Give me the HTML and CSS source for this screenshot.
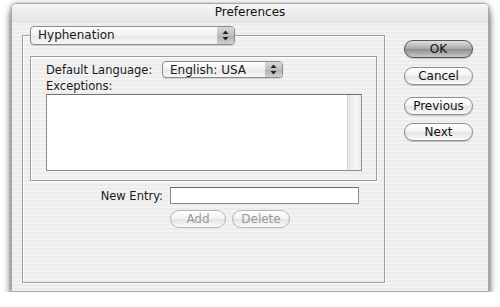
FILE: index.html
```html
<!DOCTYPE html>
<html lang="en">

<head>
    <meta charset="UTF-8">
    <title>Preferences</title>
    <link rel="stylesheet" href="styles.css">
</head>

<body>
    <div class="window">
        <div class="titlebar">Preferences</div>
        <div class="content">
            <fieldset class="panel">
                <legend class="panel-legend">
                    <div class="popup popup-section">
                        <span class="popup-label">Hyphenation</span>
                        <span class="popup-arrows">
                            <svg width="7" height="11" viewBox="0 0 7 11">
                                <path d="M3.5 0.5 L6.5 4 L0.5 4 Z" fill="#222"/>
                                <path d="M3.5 10.5 L6.5 7 L0.5 7 Z" fill="#222"/>
                            </svg>
                        </span>
                    </div>
                </legend>
                <div class="group">
                    <div class="lang-row">
                        <label class="lang-label">Default Language:</label>
                        <div class="popup popup-lang">
                            <span class="popup-label">English: USA</span>
                            <span class="popup-arrows">
                                <svg width="7" height="11" viewBox="0 0 7 11">
                                    <path d="M3.5 0.5 L6.5 4 L0.5 4 Z" fill="#222"/>
                                    <path d="M3.5 10.5 L6.5 7 L0.5 7 Z" fill="#222"/>
                                </svg>
                            </span>
                        </div>
                    </div>
                    <div class="exceptions-label">Exceptions:</div>
                    <div class="listbox">
                        <div class="list-area"></div>
                        <div class="scrollbar"></div>
                    </div>
                </div>
                <div class="entry-row">
                    <label class="entry-label" for="entry">New Entry:</label>
                    <input class="field" id="entry" type="text">
                </div>
                <div class="button-row">
                    <button class="btn btn-add" disabled>Add</button>
                    <button class="btn btn-delete" disabled>Delete</button>
                </div>
            </fieldset>
            <div class="side-buttons">
                <button class="btn btn-side btn-default">OK</button>
                <button class="btn btn-side btn-cancel">Cancel</button>
                <button class="btn btn-side btn-prev">Previous</button>
                <button class="btn btn-side btn-next">Next</button>
            </div>
        </div>
    </div>
</body>

</html>
```

FILE: styles.css
```css
body {
    margin: 0;
    padding: 0;
    background-color: #fff;
    font-family: "DejaVu Sans", sans-serif;
    font-size: 11.5px;
    color: #1a1a1a;
}

.window {
    box-sizing: border-box;
    margin: 3px 0 0 11px;
    width: 478px;
    height: 289px;
    border: 1px solid #a8a8a8;
    border-radius: 5px 5px 0 0;
    background: repeating-linear-gradient(#ececec 0, #ececec 2px, #f3f3f3 2px, #f3f3f3 4px);
    box-shadow: 0 7px 9px rgba(0, 0, 0, 0.6), 0 0 5px rgba(0, 0, 0, 0.3);
}

.titlebar {
    height: 19px;
    line-height: 17px;
    text-align: center;
    font-size: 12px;
    color: #111;
    border-radius: 4px 4px 0 0;
    background: linear-gradient(#f6f6f6, #e2e2e2);
}

.content {
    display: flex;
    gap: 19px;
    padding: 0 15px 0 10px;
}

/* main settings box */
.panel {
    box-sizing: border-box;
    width: 363px;
    height: 257px;
    margin: 3px 0 0 0;
    padding: 11px 7px 9px 7px;
    border: 1px solid #9c9c9c;
    box-shadow: 1px 1px 0 #fff, inset 1px 1px 0 #fff;
}

.panel-legend {
    padding: 0;
    margin: 0;
}

.popup {
    box-sizing: border-box;
    display: flex;
    align-items: stretch;
    border: 1px solid #8c8c8c;
    border-radius: 4px;
    background: linear-gradient(#ffffff, #f0f0f0 50%, #e6e6e6 51%, #f6f6f6);
    box-shadow: 0 1px 1px rgba(0, 0, 0, 0.15);
}

.popup-section {
    width: 205px;
    height: 19px;
}

.popup-lang {
    width: 121px;
    height: 17px;
}

.popup-label {
    flex: 1;
    padding-left: 7px;
    line-height: 16px;
    font-size: 12px;
}

.popup-section .popup-label {
    line-height: 17px;
}

.popup-arrows {
    width: 17px;
    display: flex;
    align-items: center;
    justify-content: center;
    border-radius: 0 3px 3px 0;
    background: linear-gradient(#d8d8d8, #bdbdbd 50%, #b0b0b0 51%, #cfcfcf);
}

.group {
    box-sizing: border-box;
    height: 125px;
    padding: 4px 14px 9px 15px;
    border: 1px solid #9c9c9c;
    box-shadow: 1px 1px 0 #fff, inset 1px 1px 0 #fff;
}

.lang-row {
    display: flex;
    align-items: center;
}

.lang-label {
    width: 116px;
}

.exceptions-label {
    height: 15px;
    line-height: 14px;
    margin-top: 1px;
}

.listbox {
    box-sizing: border-box;
    display: flex;
    height: 77px;
    border: 1px solid #8a8a8a;
    border-top-color: #6f6f6f;
    background-color: #fff;
}

.list-area {
    flex: 1;
}

.scrollbar {
    width: 13px;
    border-left: 1px solid #d4d4d4;
    background: linear-gradient(90deg, #e6e6e6, #f7f7f7 60%, #ececec);
}

.entry-row {
    display: grid;
    grid-template-columns: 133px 189px;
    gap: 7px;
    align-items: center;
    margin-top: 6px;
}

.entry-label {
    text-align: right;
}

.field {
    box-sizing: border-box;
    height: 17px;
    margin: 0;
    border: 1px solid #8a8a8a;
    border-top-color: #6a6a6a;
    background-color: #fff;
}

.button-row {
    display: flex;
    gap: 6px;
    margin-top: 6px;
    padding-left: 140px;
}

.btn {
    box-sizing: border-box;
    height: 18px;
    padding: 0;
    font-family: "DejaVu Sans", sans-serif;
    font-size: 12px;
    color: #111;
    border: 1px solid #8e8e8e;
    border-radius: 9px;
    background: linear-gradient(#ffffff, #f2f2f2 50%, #e2e2e2 51%, #fbfbfb);
    box-shadow: 0 1px 1px rgba(0, 0, 0, 0.2);
}

.btn:disabled {
    color: #9a9a9a;
    border-color: #b4b4b4;
    box-shadow: none;
}

.btn-add {
    width: 56px;
}

.btn-delete {
    width: 58px;
}

.side-buttons {
    display: flex;
    flex-direction: column;
    padding-top: 17px;
}

.btn-side {
    width: 69px;
}

.btn-default {
    border-color: #555;
    background: linear-gradient(#e0e0e0, #a6a6a6 50%, #8e8e8e 51%, #c8c8c8);
}

.btn-cancel {
    margin-top: 9px;
}

.btn-prev {
    margin-top: 12px;
}

.btn-next {
    margin-top: 8px;
}
```
